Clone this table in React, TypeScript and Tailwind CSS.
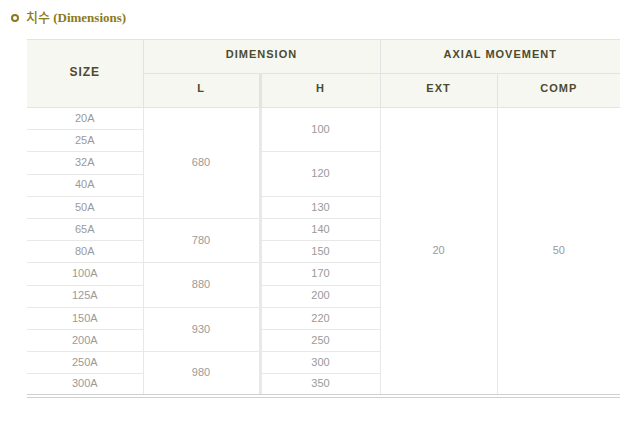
export default function App() {
  const sizes = ["20A", "25A", "32A", "40A", "50A", "65A", "80A", "100A", "125A", "150A", "200A", "250A", "300A"];
  // L value with rowspan, keyed by starting row index
  const lCells: Record<number, [string, number]> = { 0: ["680", 5], 5: ["780", 2], 7: ["880", 2], 9: ["930", 2], 11: ["980", 2] };
  const hCells: Record<number, [string, number]> = {
    0: ["100", 2], 2: ["120", 2], 4: ["130", 1], 5: ["140", 1], 6: ["150", 1], 7: ["170", 1],
    8: ["200", 1], 9: ["220", 1], 10: ["250", 1], 11: ["300", 1], 12: ["350", 1],
  };

  const th = "border border-[#e3e3e3] bg-[#f7f7f2] pb-[4px] text-[11px] font-bold tracking-[1px] text-[#4b4b2e]";
  const td = "border border-[#e8e8e8] pb-[1px] text-center text-[11px] text-[#9a9a9a]";

  return (
    <div className="w-[640px] h-[421px] bg-white pt-[9px]" style={{ fontFamily: '"Liberation Sans", "Noto Sans CJK KR", sans-serif' }}>
      <div className="flex items-center gap-[7px] pl-[11px] h-[17px]">
        <span className="w-[8px] h-[8px] rounded-full border-[2px] border-[#8c7a1e]" />
        <span className="text-[13px] font-bold text-[#8c7a1e]" style={{ fontFamily: '"Liberation Serif", "Noto Sans CJK KR", serif' }}>
          <span className="font-medium" style={{ fontFamily: '"Noto Sans CJK KR", sans-serif' }}>치수</span> (Dimensions)
        </span>
      </div>

      <div className="pl-[27px] pt-[13px]">
        <table className="w-[593px] border-collapse table-fixed border-b-[4px] border-double border-[#cfcfcf]">
          <colgroup>
            <col className="w-[116px]" />
            <col className="w-[117px]" />
            <col className="w-[120px]" />
            <col className="w-[117px]" />
            <col className="w-[123px]" />
          </colgroup>
          <thead>
            <tr className="h-[34px]">
              <th rowSpan={2} className={th + " border-l-0 text-[12px]"}>SIZE</th>
              <th colSpan={2} className={th}>DIMENSION</th>
              <th colSpan={2} className={th + " border-r-0"}>AXIAL MOVEMENT</th>
            </tr>
            <tr className="h-[34px]">
              <th className={th}>L</th>
              <th className={th + " border-l-[3px]"}>H</th>
              <th className={th}>EXT</th>
              <th className={th + " border-r-0"}>COMP</th>
            </tr>
          </thead>
          <tbody>
            {sizes.map((s, i) => (
              <tr key={s} className="h-[22.2px]">
                <td className={td + " border-l-0"}>{s}</td>
                {lCells[i] && (
                  <td rowSpan={lCells[i][1]} className={td}>{lCells[i][0]}</td>
                )}
                {hCells[i] && (
                  <td rowSpan={hCells[i][1]} className={td + " border-l-[3px]"}>{hCells[i][0]}</td>
                )}
                {i === 0 && (
                  <>
                    <td rowSpan={13} className={td}>20</td>
                    <td rowSpan={13} className={td + " border-r-0"}>50</td>
                  </>
                )}
              </tr>
            ))}
          </tbody>
        </table>
      </div>
    </div>
  );
}
